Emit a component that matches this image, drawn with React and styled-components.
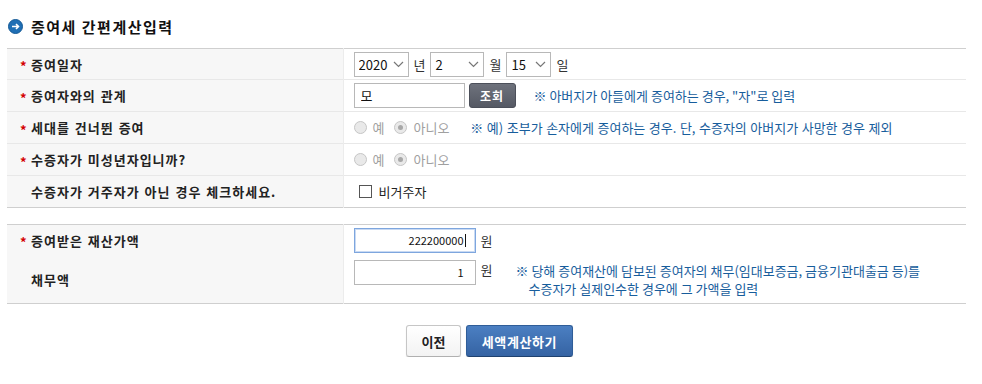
import React from 'react'
import styled, { createGlobalStyle } from 'styled-components'

const GlobalStyle = createGlobalStyle`
    body {
        margin: 0;
        background: #ffffff;
        font-family: "Noto Sans CJK KR", "Noto Sans", sans-serif;
        color: #222222;
    }
`

const Chevron = () => (
    <svg width="11" height="7" viewBox="0 0 11 7">
        <path d="M1 1 L5.5 5.5 L10 1" fill="none" stroke="#777" strokeWidth="1.2" />
    </svg>
)

const TitleIcon = () => (
    <svg width="15" height="15" viewBox="0 0 15 15">
        <circle cx="7.5" cy="7.5" r="7" fill="#1f6fb5" />
        <circle cx="7.5" cy="7.5" r="7" fill="none" stroke="#155a96" strokeWidth="1" />
        <path d="M4 7.5 H10.5 M8 5 L10.5 7.5 L8 10" fill="none" stroke="#fff" strokeWidth="1.6" />
    </svg>
)

const Select = ({ value, width }) => (
    <StyledSelectWrap>
        <StyledSelect $width={width} defaultValue={value}>
            <option>{value}</option>
        </StyledSelect>
        <StyledChevron>
            <Chevron />
        </StyledChevron>
    </StyledSelectWrap>
)

const Radio = ({ checked, label }) => (
    <StyledRadioLabel>
        <StyledRadio type="radio" disabled defaultChecked={checked} />
        {label}
    </StyledRadioLabel>
)

const App = () => {
    return (
        <>
            <GlobalStyle />
            <StyledPage>
                <StyledTitle>
                    <TitleIcon />
                    증여세 간편계산입력
                </StyledTitle>

                <StyledTable>
                    <tbody>
                        <StyledRow>
                            <StyledLabel $required>증여일자</StyledLabel>
                            <StyledData>
                                <StyledInline>
                                    <Select value="2020" width={55} />
                                    <StyledUnit>년</StyledUnit>
                                    <Select value="2" width={54} />
                                    <StyledUnit>월</StyledUnit>
                                    <Select value="15" width={45} />
                                    <StyledUnit>일</StyledUnit>
                                </StyledInline>
                            </StyledData>
                        </StyledRow>
                        <StyledRow>
                            <StyledLabel $required>증여자와의 관계</StyledLabel>
                            <StyledData>
                                <StyledInline>
                                    <StyledInput defaultValue="모" $width={111} />
                                    <StyledDarkButton>조회</StyledDarkButton>
                                    <StyledNote $offset={18}>※ 아버지가 아들에게 증여하는 경우, "자"로 입력</StyledNote>
                                </StyledInline>
                            </StyledData>
                        </StyledRow>
                        <StyledRow>
                            <StyledLabel $required>세대를 건너뛴 증여</StyledLabel>
                            <StyledData>
                                <StyledInline>
                                    <Radio label="예" />
                                    <Radio label="아니오" checked />
                                    <StyledNote $offset={21} $wide>※ 예) 조부가 손자에게 증여하는 경우. 단, 수증자의 아버지가 사망한 경우 제외</StyledNote>
                                </StyledInline>
                            </StyledData>
                        </StyledRow>
                        <StyledRow>
                            <StyledLabel $required>수증자가 미성년자입니까?</StyledLabel>
                            <StyledData>
                                <StyledInline>
                                    <Radio label="예" />
                                    <Radio label="아니오" checked />
                                </StyledInline>
                            </StyledData>
                        </StyledRow>
                        <StyledRow>
                            <StyledLabel>수증자가 거주자가 아닌 경우 체크하세요.</StyledLabel>
                            <StyledData>
                                <StyledCheckLabel>
                                    <StyledCheckbox type="checkbox" />
                                    비거주자
                                </StyledCheckLabel>
                            </StyledData>
                        </StyledRow>
                    </tbody>
                </StyledTable>

                <StyledTable $gap>
                    <tbody>
                        <StyledRow>
                            <StyledLabel $required>증여받은 재산가액</StyledLabel>
                            <StyledData>
                                <StyledInline>
                                    <StyledAmountWrap>
                                        <StyledAmount defaultValue="222200000" $focused />
                                        <StyledCaret />
                                    </StyledAmountWrap>
                                    <StyledUnit>원</StyledUnit>
                                </StyledInline>
                            </StyledData>
                        </StyledRow>
                        <StyledRow $tall>
                            <StyledLabel>채무액</StyledLabel>
                            <StyledData $top>
                                <StyledInline $top>
                                    <StyledAmount defaultValue="1" />
                                    <StyledUnit>원</StyledUnit>
                                    <StyledNoteBlock>
                                        <span>※ 당해 증여재산에 담보된 증여자의 채무(임대보증금, 금융기관대출금 등)를</span>
                                        <StyledIndent>수증자가 실제인수한 경우에 그 가액을 입력</StyledIndent>
                                    </StyledNoteBlock>
                                </StyledInline>
                            </StyledData>
                        </StyledRow>
                    </tbody>
                </StyledTable>

                <StyledButtons>
                    <StyledButton>이전</StyledButton>
                    <StyledButton $primary>세액계산하기</StyledButton>
                </StyledButtons>
            </StyledPage>
        </>
    )
}

export default App

const StyledPage = styled.div`
    width: 959px;
    padding: 0 0 0 7px;
`

const StyledTitle = styled.h2`
    margin: 0;
    height: 44px;
    padding: 4px 0 0 1px;
    display: flex;
    align-items: center;
    gap: 8px;
    font-size: 15px;
    font-weight: 700;
    color: #111111;
    letter-spacing: 1.5px;
`

const StyledTable = styled.table`
    width: 100%;
    border-collapse: collapse;
    border-top: 1px solid #cfcfcf;
    border-bottom: 1px solid #cfcfcf;
    margin-top: ${(p) => (p.$gap ? '16px' : '0')};
`

const StyledRow = styled.tr`
    height: ${(p) => (p.$tall ? '48px' : '32px')};
    &:first-child {
        height: 31px;
    }
    & + & > * {
        border-top: 1px solid #e8e8e8;
    }
`

const StyledLabel = styled.th`
    width: 336px;
    box-sizing: border-box;
    padding: 0 0 0 24px;
    background: #f7f7f7;
    border-right: 1px solid #ececec;
    text-align: left;
    font-size: 13px;
    font-weight: 700;
    letter-spacing: 1px;
    word-spacing: 1px;
    color: #222222;
    position: relative;
    &::before {
        content: ${(p) => (p.$required ? '"*"' : 'none')};
        position: absolute;
        left: 13px;
        top: 50%;
        transform: translateY(-42%);
        color: #d40000;
        font-size: 13px;
        font-weight: 700;
    }
`

const StyledData = styled.td`
    padding: ${(p) => (p.$top ? '4px 0 0 10px' : '0 0 0 10px')};
    vertical-align: ${(p) => (p.$top ? 'top' : 'middle')};
    font-size: 13px;
`

const StyledInline = styled.div`
    display: flex;
    align-items: ${(p) => (p.$top ? 'flex-start' : 'center')};
`

const StyledSelectWrap = styled.div`
    position: relative;
    display: inline-flex;
`

const StyledSelect = styled.select`
    appearance: none;
    width: ${(p) => p.$width}px;
    height: 25px;
    box-sizing: border-box;
    border: 1px solid #b8b8b8;
    border-radius: 0;
    background: #ffffff;
    padding: 0 0 0 4px;
    font-family: "Noto Sans CJK KR", sans-serif;
    font-size: 13px;
    color: #111111;
`

const StyledChevron = styled.span`
    position: absolute;
    right: 5px;
    top: 9px;
    display: flex;
    pointer-events: none;
`

const StyledUnit = styled.span`
    margin: 0 5px 0 5px;
    font-size: 13px;
    color: #333333;
`

const StyledInput = styled.input`
    width: ${(p) => p.$width}px;
    height: 25px;
    box-sizing: border-box;
    border: 1px solid #b8b8b8;
    padding: 0 6px;
    font-family: "Noto Sans CJK KR", sans-serif;
    font-size: 13px;
    color: #111111;
    outline: none;
`

const StyledAmountWrap = styled.div`
    position: relative;
    display: inline-flex;
`

const StyledAmount = styled.input`
    width: 122px;
    height: 25px;
    box-sizing: border-box;
    border: 1px solid ${(p) => (p.$focused ? '#7ea6de' : '#b8b8b8')};
    box-shadow: ${(p) => (p.$focused ? 'inset 0 0 0 1px #c9daf3' : 'none')};
    padding: 0 11px 0 6px;
    text-align: right;
    font-family: "Noto Sans CJK KR", sans-serif;
    font-size: 11px;
    color: #111111;
    outline: none;
`

const StyledCaret = styled.span`
    position: absolute;
    right: 10px;
    top: 6px;
    width: 1px;
    height: 13px;
    background: #111111;
`

const StyledDarkButton = styled.button`
    margin-left: 4px;
    width: 47px;
    height: 25px;
    border: 1px solid #4c505a;
    border-radius: 3px;
    background: linear-gradient(#6e727c, #555964);
    color: #ffffff;
    font-family: "Noto Sans CJK KR", sans-serif;
    font-size: 12px;
    font-weight: 700;
    letter-spacing: 1px;
    padding: 0;
`

const StyledNote = styled.span`
    margin-left: ${(p) => p.$offset}px;
    font-size: 13px;
    word-spacing: ${(p) => (p.$wide ? '0.6px' : '0')};
    color: #175d9c;
    white-space: nowrap;
`

const StyledNoteBlock = styled.div`
    margin-left: 18px;
    margin-top: 2px;
    display: flex;
    flex-direction: column;
    font-size: 13px;
    line-height: 18px;
    color: #175d9c;
`

const StyledIndent = styled.span`
    padding-left: 13px;
`

const StyledRadioLabel = styled.label`
    display: inline-flex;
    align-items: center;
    gap: 6px;
    font-size: 13px;
    color: #a0a0a0;
    & + & {
        margin-left: 10px;
    }
`

const StyledRadio = styled.input`
    appearance: none;
    margin: 0;
    width: 13px;
    height: 13px;
    border-radius: 50%;
    border: 1px solid #c6c6c6;
    background: #e9e9e9;
    position: relative;
    &:checked::after {
        content: "";
        position: absolute;
        left: 3px;
        top: 3px;
        width: 5px;
        height: 5px;
        border-radius: 50%;
        background: #a8a8a8;
    }
`

const StyledCheckLabel = styled.label`
    display: inline-flex;
    align-items: center;
    gap: 7px;
    padding-left: 5px;
    font-size: 13px;
    color: #222222;
`

const StyledCheckbox = styled.input`
    appearance: none;
    margin: 0;
    width: 13px;
    height: 13px;
    border: 1px solid #555555;
    background: #ffffff;
`

const StyledButtons = styled.div`
    display: flex;
    justify-content: center;
    gap: 5px;
    margin-top: 21px;
    padding-left: 6px;
`

const StyledButton = styled.button`
    height: 32px;
    padding: 0;
    width: ${(p) => (p.$primary ? '107px' : '55px')};
    border-radius: 3px;
    border: 1px solid ${(p) => (p.$primary ? '#2f5d98' : '#c6c6c6')};
    border-bottom-color: ${(p) => (p.$primary ? '#1f416e' : '#b0b0b0')};
    background: ${(p) => (p.$primary ? 'linear-gradient(#4b7fc2, #3563a3)' : 'linear-gradient(#ffffff, #f3f3f3)')};
    color: ${(p) => (p.$primary ? '#ffffff' : '#222222')};
    font-family: "Noto Sans CJK KR", sans-serif;
    font-size: 13px;
    font-weight: 700;
    letter-spacing: ${(p) => (p.$primary ? '0.6px' : '0')};
    box-shadow: 0 1px 1px rgba(0, 0, 0, 0.12);
`
